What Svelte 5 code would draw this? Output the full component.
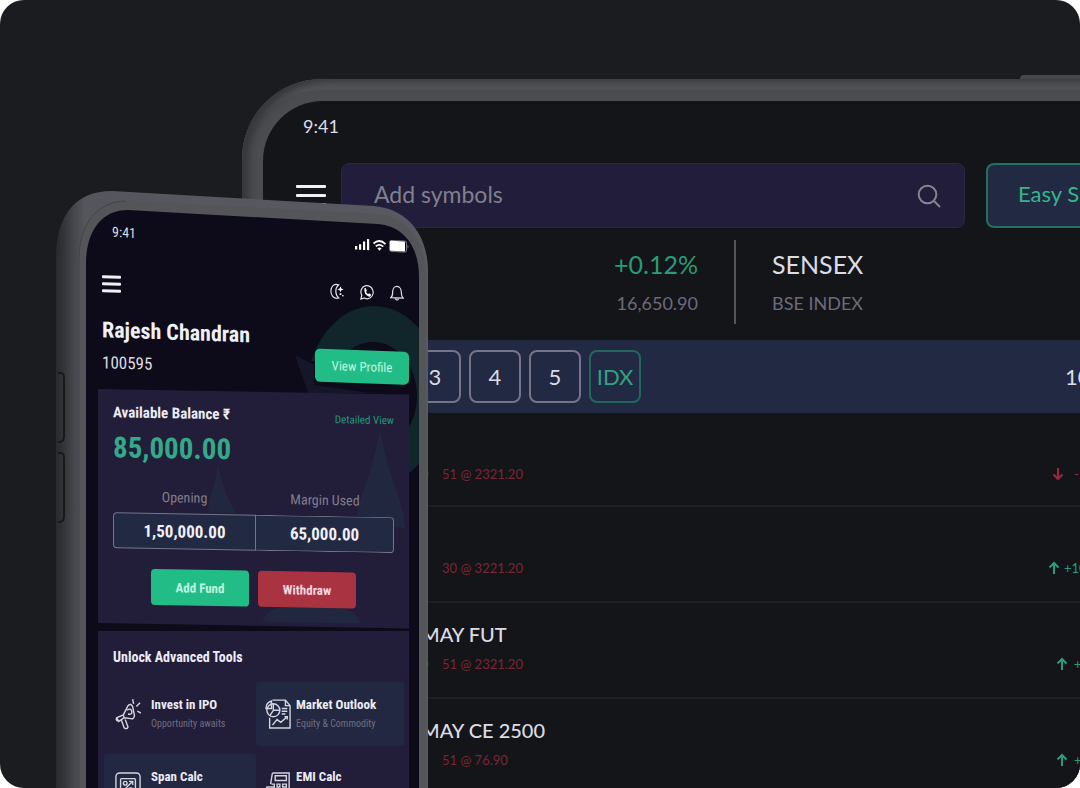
<script lang="ts">
    type Quote = { name?: string; ask?: string; bid: string; up: boolean; change: string };

    const pages = ['3', '4', '5'];

    const quotes: Quote[] = [
        { ask: '0', bid: '51 @ 2321.20', up: false, change: '-' },
        { bid: '30 @ 3221.20', up: true, change: '+10' },
        { name: 'MAY FUT', ask: '0', bid: '51 @ 2321.20', up: true, change: '+' },
        { name: 'MAY CE 2500', bid: '51 @ 76.90', up: true, change: '+' },
    ];

    const tools = [
        { icon: 'megaphone', title: 'Invest in IPO', note: 'Opportunity awaits', tinted: false },
        { icon: 'report', title: 'Market Outlook', note: 'Equity & Commodity', tinted: true },
        { icon: 'percent', title: 'Span Calc', note: '', tinted: true },
        { icon: 'calculator', title: 'EMI Calc', note: '', tinted: false },
    ];
</script>

<main class="showcase">
    <section class="tablet">
        <i class="tablet-key"></i>
        <div class="tablet-screen">
            <div class="tablet-time">9:41</div>
            <div class="toolbar">
                <button class="menu" aria-label="Menu"><i></i><i></i><i></i></button>
                <label class="search">
                    <input type="text" placeholder="Add symbols" aria-label="Add symbols" />
                    <svg viewBox="0 0 24 24" width="24" height="24">
                        <circle cx="10.5" cy="10.5" r="8.8" />
                        <path d="M17 17l6 6" />
                    </svg>
                </label>
                <button class="easy">Easy S</button>
            </div>
            <div class="indices">
                <div class="index nifty">
                    <div class="index-main gain">+0.12%</div>
                    <div class="index-sub">16,650.90</div>
                </div>
                <div class="index">
                    <div class="index-main">SENSEX</div>
                    <div class="index-sub">BSE INDEX</div>
                </div>
            </div>
            <nav class="pages">
                {#each pages as page}
                    <button class="chip">{page}</button>
                {/each}
                <button class="chip idx">IDX</button>
                <span class="count">10</span>
            </nav>
            <ul class="quotes">
                {#each quotes as q}
                    <li class="quote">
                        <div class="quote-name">{q.name ?? ''}</div>
                        <div class="quote-line">
                            <span class="ask">{q.ask ?? ''}</span>
                            <span class="bid">{q.bid}</span>
                            <span class="change" class:up={q.up} class:wide={q.change.length > 1}>
                                <svg viewBox="0 0 12 14" width="12" height="14">
                                    {#if q.up}
                                        <path d="M6 13V2M1.5 6.5L6 2l4.5 4.5" />
                                    {:else}
                                        <path d="M6 1v11M1.5 7.5L6 12l4.5-4.5" />
                                    {/if}
                                </svg>
                                {q.change}
                            </span>
                        </div>
                    </li>
                {/each}
            </ul>
        </div>
    </section>

    <section class="phone">
        <svg class="shell" viewBox="0 0 372 1600" width="372" height="1600">
            <defs>
                <linearGradient id="side" x1="0" x2="1">
                    <stop offset="0" stop-color="#292a2d" />
                    <stop offset=".015" stop-color="#303134" />
                    <stop offset=".05" stop-color="#47484d" />
                    <stop offset=".08" stop-color="#55565d" />
                    <stop offset="1" stop-color="#585a63" />
                </linearGradient>
                <clipPath id="glass">
                    <path d="M30 1600V72C30 41 45 19 72 19L322 33C347 35 363 55 363 86V1600Z" />
                </clipPath>
            </defs>
            <path fill="url(#side)" d="M0 1600V67C0 26 18 0 56 0L318 15C351 18 372 43 372 81V1600Z" />
            <path fill="#545559" d="M23 1600V70C23 32 42 10 70 10L323 23C350 26 370 50 370 84V1600Z" />
            <path fill="none" stroke="#44454a" d="M23 1600V70C23 32 42 10 70 10" />
            <g clip-path="url(#glass)">
                <rect width="372" height="1600" fill="#0d0b19" />
                <path fill="#10262a" fill-rule="evenodd" d="M250 205a68 90 0 1 1 136 0a68 90 0 1 1-136 0M273 205a44 54 0 1 0 88 0a44 54 0 1 0-88 0" />
                <path fill="#0d0b19" d="M230 170h60v60h-60z" />
                <path fill="#15162a" d="M239 164l19 10v20l56 8h-62z" />
            </g>
            <path class="key" d="M2 182h3q3 0 3 5v58q0 6-5 6H2M2 262h3q3 0 3 5v58q0 6-5 6H2" />
        </svg>

        <div class="phone-screen">
            <div class="phone-status">
                <span>9:41</span>
                <svg viewBox="0 0 54 14" width="54" height="14">
                    <path fill="#fff" d="M0 8.500h2.200V12H0zM4 6.500h2.200V12H4zM8 3.500h2.200V12H8zM12 1h2.200v11H12z" />
                    <g fill="none" stroke="#fff" stroke-width="1.8">
                        <path d="M18.500 5Q24.500-.5 30.500 5M20.800 7.600Q24.500 4.600 28.200 7.600" />
                    </g>
                    <path fill="#fff" d="M22.400 9.500Q24.500 8 26.600 9.500L24.500 12z" />
                    <rect x="34.5" y="1" width="17" height="11" rx="2.500" fill="none" stroke="#77767f" />
                    <rect x="35" y="1.5" width="15" height="10" rx="1" fill="#fff" />
                    <path fill="#77767f" d="M52.500 4.500q2 2 0 4z" />
                </svg>
            </div>

            <header class="profile">
                <div class="profile-bar">
                    <button class="menu small" aria-label="Menu"><i></i><i></i><i></i></button>
                    <button class="icon" aria-label="Dark mode">
                        <svg viewBox="0 0 16 18" width="14" height="18">
                            <path d="M10 1.500C4.500-.5 1 4 1 9s3.500 9.500 9 7.500C5.500 13 5.500 5 10 1.500z" />
                            <path fill="#fff" stroke="none" d="M12 3l1 2.500 2.500 1L13 7.500 12 10l-1-2.500-2.500-1 2.500-1zM11 11h2v2h-2zM14 13h1.500v1.500H14z" />
                        </svg>
                    </button>
                    <button class="icon" aria-label="WhatsApp">
                        <svg viewBox="0 0 16 18" width="14" height="18">
                            <path d="M1 17l1-4.500A7 7.500 0 1 1 5 15.500z" />
                            <path fill="#fff" stroke="none" d="M5 4.500l1.500-.5 1.400 3-1 1.200q.8 2 2.400 2.800l1.200-1 2.300 1.400q0 2.400-2.500 2.400Q4.200 12 5 4.500z" />
                        </svg>
                    </button>
                    <button class="icon" aria-label="Notifications">
                        <svg viewBox="0 0 16 18" width="14" height="18">
                            <path d="M1 14c2-1.500 2-3 2-6 0-4 2-7 5-7s5 3 5 7c0 3 0 4.500 2 6zM6 15q2 3 4 0" />
                        </svg>
                    </button>
                </div>
                <div class="profile-info">
                    <div>
                        <h1>Rajesh Chandran</h1>
                        <div class="client">100595</div>
                    </div>
                    <button class="view-profile">View Profile</button>
                </div>
            </header>

            <section class="balance">
                <svg class="peaks" viewBox="0 0 311 234" width="311" height="234">
                    <path d="M282 34C275 78 263 96 257 130l50 4C304 98 289 82 282 34zM120 72c-2 22-10 34-10 50h28c-8-14-14-28-18-50zM164 230q8-16 22-15h50q22-2 26 15z" />
                </svg>
                <div class="balance-head">
                    <h2>Available Balance ₹</h2>
                    <a href="#detail">Detailed View</a>
                </div>
                <div class="amount">85,000.00</div>
                <dl class="figures">
                    <div><dt>Opening</dt><dd>1,50,000.00</dd></div>
                    <div><dt>Margin Used</dt><dd>65,000.00</dd></div>
                </dl>
                <div class="actions">
                    <button class="fund">Add Fund</button>
                    <button class="withdraw">Withdraw</button>
                </div>
            </section>

            <section class="tools">
                <h2>Unlock Advanced Tools</h2>
                <div class="tool-grid">
                    {#each tools as tool}
                        <a class="tool" class:tinted={tool.tinted} href="#{tool.icon}">
                            <svg viewBox="0 0 28 34" width="26" height="34">
                                {#if tool.icon === 'megaphone'}
                                    <path d="M2 21l7-3 5-10q3-3 5 1l2 10q-1 4-4 3l-7-1-6 4zM2 21q-2 3 2 4M9 18l1 4M7 24l3 8q3 2 4-1l-3-8M13 13q4-3 5 1t-4 3M20 6l-1-5M23 9l4-4M24 14l4 2" />
                                {:else if tool.icon === 'report'}
                                    <path d="M8 2h14l5 6v24H5V21M22 2v6h5M18 11h6M18 14h6M18 17h4M8 29l5-6 4 3 7-6M21 20h3v3" />
                                    <circle cx="9" cy="13" r="7" />
                                    <path d="M9 6v7h7M9 13l-4 6M7 3a7 8 0 0 0-6 8h6z" />
                                {:else if tool.icon === 'percent'}
                                    <rect x="1" y="3" width="26" height="29" rx="4" />
                                    <rect x="6" y="9" width="16" height="16" rx="1" />
                                    <circle cx="11" cy="14" r="2" /><circle cx="17" cy="21" r="2" />
                                    <path d="M9 22l10-10M15 12h4v4" />
                                {:else}
                                    <path d="M8 3h18v30H4M11 6h12v5H11zM7 15h3v3H7M13 15h3v3h-3zM19 15h4v3h-4zM14 21h3M20 21h4M14 25h3M20 25h4M8 3L6 15M1 22h10l-2 3H1M2 18h8v3H2z" />
                                {/if}
                            </svg>
                            <span class="tool-text">
                                <strong>{tool.title}</strong>
                                <small>{tool.note}</small>
                            </span>
                        </a>
                    {/each}
                </div>
            </section>
        </div>
    </section>
</main>

<style>
    :global(body) {
        margin: 0;
        background: #fff;
    }
    .showcase {
        position: relative;
        display: flex;
        min-height: 100vh;
        max-height: 100vh;
        box-sizing: border-box;
        overflow: hidden;
        border-radius: 24px;
        background: #1b1c20;
        color: #dcdce6;
        font-family: Lato, "Open Sans", sans-serif;
    }
    button {
        padding: 0;
        border: 0;
        background: none;
        color: inherit;
        font: inherit;
        cursor: pointer;
    }
    svg {
        flex: none;
    }
    h1,
    h2,
    dl,
    dd,
    ul {
        margin: 0;
        padding: 0;
    }
    a {
        color: inherit;
        text-decoration: none;
    }

    .tablet {
        position: relative;
        flex: 1;
        min-width: 0;
        margin: 79px 0 0 242px;
        padding: 22px 0 0 21px;
        border-radius: 80px 0 0 0;
        background: #4b4c50;
        box-shadow: inset 7px 3px 7px #37383d, inset 0 11px 0 #525357;
    }
    .tablet-key {
        position: absolute;
        top: -4px;
        right: 0;
        width: 60px;
        height: 4px;
        border-radius: 4px 0 0 0;
        background: #47484c;
    }
    .tablet-screen {
        height: 100%;
        overflow: hidden;
        border-radius: 60px 0 0 0;
        background: #141519;
    }
    .tablet-time {
        padding: 14px 0 0 40px;
        font-size: 18px;
        line-height: 22px;
    }
    .toolbar {
        display: flex;
        align-items: center;
        height: 65px;
        margin-top: 26px;
        padding-left: 33px;
    }
    .menu {
        display: flex;
        flex-direction: column;
        gap: 6px;
        width: 30px;
        margin-right: 15px;
    }
    .menu i {
        height: 3px;
        border-radius: 1px;
        background: #f0f0f6;
    }
    .search {
        display: flex;
        flex: 1;
        align-items: center;
        height: 63px;
        min-width: 0;
        padding: 0 23px 0 32px;
        border: 1px solid #272842;
        border-radius: 8px;
        background: #221d3a;
    }
    .search input {
        flex: 1;
        min-width: 0;
        padding: 0 0 4px;
        border: 0;
        outline: 0;
        background: none;
        color: #dcdce6;
        font: 23px Lato, "Open Sans", sans-serif;
    }
    .search input::placeholder {
        color: #81808f;
        opacity: 1;
    }
    .search svg {
        fill: none;
        stroke: #858491;
        stroke-width: 2;
    }
    .easy {
        flex: 0 0 94px;
        box-sizing: border-box;
        height: 65px;
        min-width: 0;
        margin-left: 21px;
        padding: 0 0 4px 30px;
        overflow: hidden;
        border: 2px solid #22705f;
        border-right: 0;
        border-radius: 8px 0 0 8px;
        background: #222943;
        color: #36b58b;
        font-size: 22px;
        text-align: left;
        white-space: nowrap;
    }
    .indices {
        display: flex;
        height: 84px;
        margin: 12px 0 16px;
    }
    .index {
        box-sizing: border-box;
        padding: 8px 36px 0;
    }
    .nifty {
        flex: 0 0 473px;
        border-right: 2px solid #55555d;
        text-align: right;
    }
    .index-main {
        font-size: 25px;
        line-height: 32px;
    }
    .index-sub {
        margin-top: 11px;
        color: #6c6b79;
        font-size: 18px;
        line-height: 24px;
    }
    .gain {
        color: #289c77;
    }
    .pages {
        display: flex;
        align-items: center;
        gap: 8px;
        height: 73px;
        padding-left: 146px;
        background: #222943;
    }
    .chip {
        box-sizing: border-box;
        width: 52px;
        height: 53px;
        border: 2px solid #75758a;
        border-radius: 8px;
        font-size: 22px;
    }
    .idx {
        border-color: #23665e;
        color: #31a382;
    }
    .count {
        width: 15px;
        margin-left: auto;
        font-size: 22px;
    }
    .quotes {
        list-style: none;
    }
    .quote {
        box-sizing: border-box;
        height: 96px;
        padding: 19px 0 0 158px;
        border-bottom: 2px solid #1d1e26;
    }
    .quote:first-child {
        height: 94px;
    }
    .quote-name {
        height: 24px;
        color: #dcdce6;
        font-size: 20px;
        font-weight: 500;
        line-height: 24px;
    }
    .quote-line {
        display: flex;
        align-items: center;
        height: 22px;
        margin-top: 7px;
        font-size: 13px;
    }
    .ask {
        width: 21px;
        color: #28836f;
    }
    .bid {
        color: #7b2634;
    }
    .change {
        display: flex;
        align-items: center;
        gap: 10px;
        width: 28px;
        margin-left: auto;
        color: #9c2b39;
    }
    .change.up {
        width: 24px;
        gap: 6px;
        color: #279d7e;
    }
    .change.wide {
        width: 32px;
        gap: 4px;
    }
    .change svg {
        fill: none;
        stroke: currentColor;
        stroke-width: 2;
    }

    .phone {
        position: absolute;
        top: 191px;
        bottom: 0;
        left: 56px;
        width: 372px;
        overflow: hidden;
        font-family: "Liberation Sans Narrow", "Roboto Condensed", "Open Sans Condensed", Roboto, sans-serif;
    }
    .shell {
        position: absolute;
        top: 0;
        left: 0;
    }
    .key {
        fill: none;
        stroke: #19191c;
        stroke-width: 2;
    }
    .phone-screen {
        position: relative;
        padding: 32px 19px 0 42px;
    }
    .phone-status {
        display: flex;
        justify-content: space-between;
        align-items: center;
        height: 16px;
        padding: 0 0 0 14px;
        font-size: 14px;
        transform: skewY(3deg);
        transform-origin: 0 0;
    }
    .profile {
        padding: 0 0 0 4px;
        transform: skewY(2deg);
        transform-origin: 0 0;
    }
    .profile-bar {
        display: flex;
        align-items: center;
        height: 20px;
        margin-top: 34px;
        padding-right: 5px;
    }
    .menu.small {
        gap: 4px;
        width: 19px;
        margin-right: auto;
    }
    .icon {
        display: flex;
        margin-left: 16px;
    }
    .icon svg {
        fill: none;
        stroke: #dedde8;
        stroke-width: 1.4;
    }
    .profile-info {
        display: flex;
        align-items: flex-end;
        justify-content: space-between;
        margin-top: 22px;
    }
    h1 {
        color: #f0f0f8;
        font-size: 22px;
        line-height: 30px;
    }
    .client {
        margin-top: 5px;
        font-size: 17px;
        line-height: 24px;
    }
    .view-profile {
        width: 94px;
        height: 33px;
        border-radius: 5px;
        background: #22bd87;
        color: #bff5e0;
        font-size: 13px;
    }
    .balance {
        position: relative;
        height: 234px;
        margin-top: 15px;
        box-sizing: border-box;
        padding: 12px 15px 0;
        background: #221d38;
        transform: skewY(1deg);
        transform-origin: 0 0;
    }
    .peaks {
        position: absolute;
        top: 0;
        left: 0;
        fill: #222740;
    }
    .balance-head,
    .amount,
    .figures,
    .actions {
        position: relative;
    }
    .balance-head {
        display: flex;
        align-items: center;
        justify-content: space-between;
    }
    h2 {
        color: #ececf6;
        font-size: 15px;
        line-height: 22px;
    }
    .balance-head a {
        padding-top: 8px;
        color: #2a947d;
        font-size: 11px;
        line-height: 14px;
    }
    .amount {
        margin-top: 6px;
        color: #34a989;
        font-size: 29px;
        font-weight: 700;
        line-height: 36px;
    }
    .figures {
        display: grid;
        grid-template-columns: 143px 1fr;
        margin-top: 21px;
        text-align: center;
    }
    dt {
        color: #817d8e;
        font-size: 14px;
        line-height: 20px;
    }
    dd {
        margin-top: 6px;
        border: 1px solid #77748a;
        background: #222943;
        color: #f0f0f8;
        font-size: 17px;
        font-weight: 700;
        line-height: 34px;
    }
    .figures div:first-child dd {
        border-radius: 4px 0 0 4px;
    }
    .figures div:last-child dd {
        border-left: 0;
        border-radius: 0 4px 4px 0;
    }
    .actions {
        display: flex;
        justify-content: center;
        gap: 9px;
        margin-top: 20px;
    }
    .actions button {
        width: 98px;
        height: 36px;
        border-radius: 4px;
        font-size: 13px;
        font-weight: 700;
    }
    .fund {
        background: #22bd87;
        color: #bff5e0;
    }
    .withdraw {
        background: #aa3341;
        color: #f3d9e0;
    }
    .tools {
        margin-top: 8px;
        padding: 15px 5px 0 6px;
        background: #221d38;
    }
    .tools h2 {
        padding-left: 9px;
        font-size: 14px;
    }
    .tool-grid {
        display: grid;
        grid-template-columns: 152px 1fr;
        row-gap: 8px;
        margin-top: 14px;
    }
    .tool {
        display: flex;
        align-items: center;
        gap: 10px;
        height: 64px;
        padding-left: 11px;
        border-radius: 3px;
    }
    .tool:nth-child(even) {
        gap: 5px;
        padding-left: 9px;
    }
    .tinted {
        background: #222841;
    }
    .tool svg {
        fill: none;
        stroke: #d5d5e0;
        stroke-width: 1.5;
    }
    .tool-text {
        display: flex;
        flex-direction: column;
    }
    .tool strong {
        color: #ececf6;
        font-size: 13px;
        line-height: 20px;
    }
    .tool small {
        height: 18px;
        color: #706e80;
        font-size: 10px;
        line-height: 18px;
    }
</style>
